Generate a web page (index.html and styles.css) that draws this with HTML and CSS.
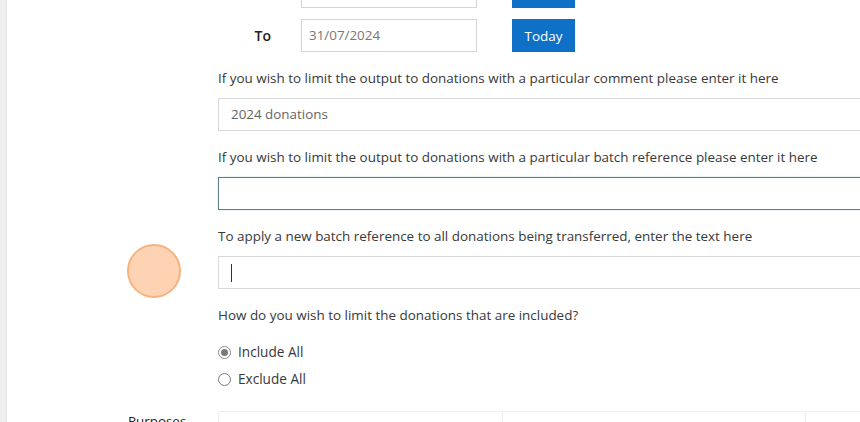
FILE: index.html
```html
<!DOCTYPE html>
<html>
<head>
<meta charset="utf-8">
<link rel="stylesheet" href="styles.css">
</head>
<body>
<div class="page">
  <div class="strip"></div>
  <main class="content">
    <div class="date-row">
      <span class="date-label"></span>
      <div class="date-input"></div>
      <button class="btn-today">Today</button>
    </div>
    <div class="date-row">
      <span class="date-label">To</span>
      <div class="date-input">31/07/2024</div>
      <button class="btn-today">Today</button>
    </div>
    <div class="field">
      <p class="label">If you wish to limit the output to donations with a particular comment please enter it here</p>
      <div class="text-input">2024 donations</div>
    </div>
    <div class="field">
      <p class="label">If you wish to limit the output to donations with a particular batch reference please enter it here</p>
      <div class="text-input focused"></div>
    </div>
    <div class="field">
      <p class="label">To apply a new batch reference to all donations being transferred, enter the text here</p>
      <div class="text-input"><span class="caret"></span></div>
    </div>
    <div class="field">
      <p class="label">How do you wish to limit the donations that are included?</p>
      <div class="radios">
        <label class="radio-row"><span class="radio checked"></span>Include All</label>
        <label class="radio-row"><span class="radio"></span>Exclude All</label>
      </div>
    </div>
    <div class="purposes-row">
      <span class="purposes-label">Purposes</span>
      <div class="ptable">
        <div class="pcell c1"></div>
        <div class="pcell c2"></div>
        <div class="pcell c3"></div>
      </div>
    </div>
  </main>
  <div class="click-dot"></div>
</div>
</body>
</html>
```
FILE: styles.css
```css
html, body {
  margin: 0;
  padding: 0;
  background: #ffffff;
  overflow: hidden;
  height: 422px;
}
body {
  font-family: "Open Sans", "Noto Sans", sans-serif;
  color: #333333;
}
.page {
  position: relative;
  display: flex;
  width: 860px;
  height: 422px;
  overflow: hidden;
}
.strip {
  flex: 0 0 6px;
  background: #efefef;
  border-right: 1px solid #e6e6e6;
}
.content {
  flex: 1 0 auto;
  padding-left: 211px;
  margin-top: -25px;
  display: flex;
  flex-direction: column;
}
.date-row {
  display: flex;
  align-items: center;
  height: 33px;
  margin-bottom: 11px;
}
.date-label {
  width: 83px;
  box-sizing: border-box;
  padding-right: 30px;
  text-align: right;
  font-size: 14px;
  font-weight: 600;
  color: #222;
}
.date-input {
  width: 176px;
  height: 33px;
  box-sizing: border-box;
  border: 1px solid #d4d4d4;
  padding: 0 7px;
  font-size: 13.4px;
  line-height: 31px;
  color: #777;
}
.btn-today {
  margin-left: 35px;
  width: 63px;
  height: 33px;
  border: none;
  background: #0f70c7;
  color: #ffffff;
  font-family: "Open Sans", "Noto Sans", sans-serif;
  font-size: 13.5px;
  padding: 0;
}
.field {
  margin-top: 5px;
}
.label {
  margin: 0 0 10px 0;
  font-size: 13.45px;
  line-height: 20px;
  color: #383838;
  white-space: nowrap;
}
.text-input {
  width: 720px;
  height: 33px;
  box-sizing: border-box;
  border: 1px solid #d9d9d9;
  padding: 0 12px;
  font-size: 13.4px;
  line-height: 31px;
  color: #666;
  margin-bottom: 11px;
  display: flex;
  align-items: center;
}
.text-input.focused {
  border-color: #5d7c86;
  box-shadow: 0 0 2px rgba(160, 200, 220, 0.5);
}
.caret {
  display: block;
  width: 1px;
  height: 18px;
  background: #333;
}
.radios {
  display: flex;
  flex-direction: column;
  gap: 7px;
  margin-top: 17px;
}
.radio-row {
  display: flex;
  align-items: center;
  gap: 7px;
  font-size: 13.6px;
  line-height: 20px;
  color: #383838;
}
.radio {
  width: 11px;
  height: 11px;
  border: 1px solid #777;
  border-radius: 50%;
  box-sizing: content-box;
  position: relative;
  background: #fff;
}
.radio.checked {
  border-color: #8a8a8a;
}
.radio.checked::after {
  content: "";
  position: absolute;
  left: 2px;
  top: 2px;
  width: 7px;
  height: 7px;
  border-radius: 50%;
  background: #7a7a7a;
}
.purposes-row {
  display: flex;
  margin-top: 22px;
  margin-left: -90px;
}
.purposes-label {
  width: 90px;
  box-sizing: border-box;
  font-size: 13.4px;
  line-height: 20px;
  color: #222;
}
.ptable {
  display: flex;
  border-top: 1px solid #efefef;
  height: 30px;
}
.pcell {
  border-left: 1px solid #eeeeee;
  height: 30px;
}
.c1 { width: 283px; }
.c2 { width: 302px; }
.c3 { width: 100px; }
.click-dot {
  position: absolute;
  left: 127px;
  top: 244px;
  width: 50px;
  height: 50px;
  border-radius: 50%;
  background: #fdd3b4;
  border: 2px solid #f6b27f;
}
```
